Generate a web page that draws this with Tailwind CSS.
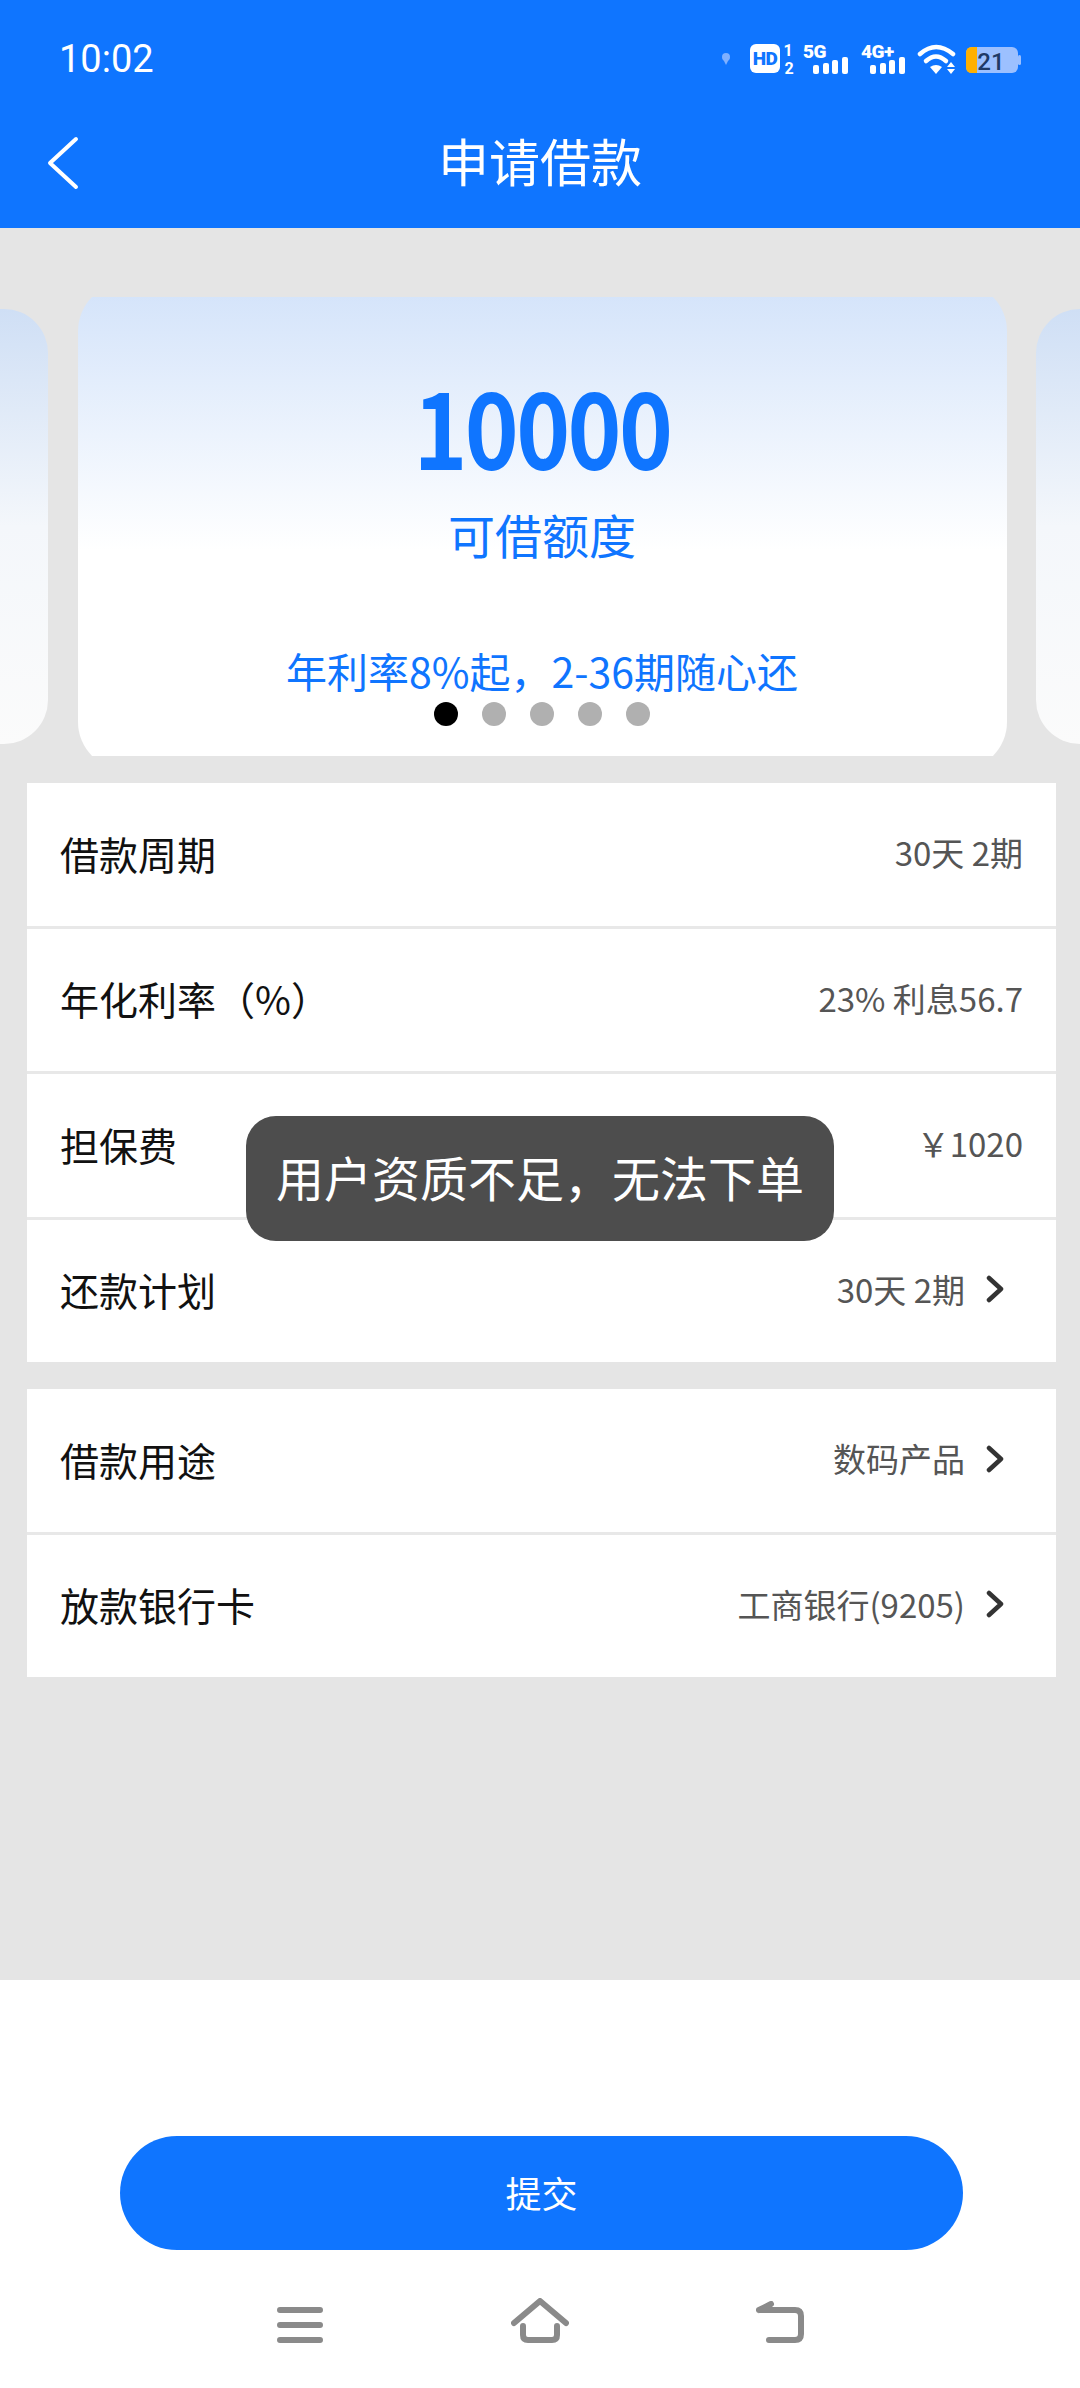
<!DOCTYPE html>
<html lang="zh">
<head>
<meta charset="utf-8">
<script src="https://cdn.jsdelivr.net/npm/@tailwindcss/browser@4"></script>
<title>申请借款</title>
</head>
<body class="font-['Noto_Sans_CJK_SC',sans-serif] bg-white">
<div class="relative w-[1080px] h-[2388px] flex flex-col overflow-hidden">

    <!-- header -->
    <header class="bg-[#0f75ff] h-[228px] shrink-0 text-white">
        <div class="h-[120px] flex justify-between items-start pl-[59px] pr-[58px] pt-[30px]">
            <span class="font-['Roboto',sans-serif] text-[38px] leading-[58px]">10:02</span>
            <svg width="300" height="40" viewBox="0 0 300 40" class="mt-[10px]" fill="#fff">
                <circle cx="4" cy="17" r="4" fill="#7fb0ff"/>
                <path d="M1 19 L4 25 L7 19 Z" fill="#7fb0ff"/>
                <rect x="28" y="4" width="30" height="29" rx="6"/>
                <text x="43" y="25" text-anchor="middle" font-family="Roboto" font-weight="900" font-size="19" letter-spacing="-0.5" fill="#0f75ff">HD</text>
                <text x="66" y="16" text-anchor="middle" font-family="Roboto" font-weight="700" font-size="16">1</text>
                <text x="67" y="34" text-anchor="middle" font-family="Roboto" font-weight="700" font-size="16">2</text>
                <text x="81" y="18" font-family="Roboto" font-weight="900" font-size="19" letter-spacing="-0.5">5G</text>
                <rect x="91" y="25" width="6" height="9" rx="2"/>
                <rect x="101" y="23" width="6" height="11" rx="2"/>
                <rect x="110" y="20" width="6" height="14" rx="2"/>
                <rect x="120" y="17" width="6" height="17" rx="2"/>
                <text x="139" y="18" font-family="Roboto" font-weight="900" font-size="19" letter-spacing="-0.5">4G+</text>
                <rect x="148" y="25" width="6" height="9" rx="2"/>
                <rect x="158" y="23" width="6" height="11" rx="2"/>
                <rect x="167" y="20" width="6" height="14" rx="2"/>
                <rect x="177" y="17" width="6" height="17" rx="2"/>
                <g fill="none" stroke="#fff" stroke-width="4.5" stroke-linecap="round">
                    <path d="M198 14 Q214 0 231 14"/>
                    <path d="M204 21 Q214 12 224 21"/>
                </g>
                <path d="M208 27 Q214 23 220 27 L214 34 Z"/>
                <path d="M225 27 L229 22 L233 27 Z M225 29 L233 29 L229 34 Z"/>
                <rect x="244" y="7" width="52" height="26" rx="6" fill="#9cc0ff"/>
                <rect x="296" y="15" width="3" height="10" rx="1.5" fill="#9cc0ff"/>
                <path d="M250 7 H255 V33 H250 Q244 33 244 27 V13 Q244 7 250 7 Z" fill="#ffb000"/>
                <text x="269" y="30" text-anchor="middle" font-family="Roboto" font-weight="500" font-size="24" fill="#1f3a66">21</text>
            </svg>
        </div>
        <div class="relative h-[108px] flex items-start justify-center">
            <svg width="32" height="54" viewBox="0 0 32 54" class="absolute left-[47px] top-[16px]" fill="none" stroke="#fff" stroke-width="4" stroke-linecap="round" stroke-linejoin="round">
                <path d="M29 3 L3 27 L29 51"/>
            </svg>
            <h1 class="text-[51px] leading-[80px] text-center">申请借款</h1>
        </div>
    </header>

    <!-- page body -->
    <main class="bg-[#e5e5e5] h-[1752px] shrink-0 pt-[69px]">
        <div class="flex items-center justify-between h-[459px] overflow-hidden">
            <div class="w-[48px] h-[435px] rounded-r-[44px] bg-gradient-to-b from-[#cfdff5] via-[#f4f7fb] via-50% to-[#fbfbfb]"></div>
            <div class="w-[929px] h-[459px] overflow-hidden">
                <div class="h-[487px] -mt-[14px] rounded-[48px] bg-gradient-to-b from-[#d3e3fa] to-white to-55% flex flex-col items-center text-[#0f75ff]">
                    <div class="text-[104px] font-bold leading-[120px] mt-[82px] tracking-[-3px] scale-x-[0.88]">10000</div>
                    <div class="text-[47px] leading-[60px] mt-[19px]">可借额度</div>
                    <div class="text-[41px] leading-[56px] mt-[78px]">年利率8%起，2-36期随心还</div>
                    <div class="flex gap-[24px] mt-[4px]">
                        <span class="w-[24px] h-[24px] rounded-full bg-black"></span>
                        <span class="w-[24px] h-[24px] rounded-full bg-[#b0b0b0]"></span>
                        <span class="w-[24px] h-[24px] rounded-full bg-[#b0b0b0]"></span>
                        <span class="w-[24px] h-[24px] rounded-full bg-[#b0b0b0]"></span>
                        <span class="w-[24px] h-[24px] rounded-full bg-[#b0b0b0]"></span>
                    </div>
                </div>
            </div>
            <div class="w-[44px] h-[435px] rounded-l-[44px] bg-gradient-to-b from-[#cfdff5] via-[#f4f7fb] via-50% to-[#fbfbfb]"></div>
        </div>

        <section class="mx-[27px] w-[1029px] mt-[27px] bg-[#e8e8e8] flex flex-col gap-[3px]">
            <div class="h-[142.5px] bg-white flex items-center justify-between pl-[33px] pr-[33px] pb-[3px]">
                <span class="text-[39px] text-[#111]">借款周期</span>
                <span class="text-[33px] text-[#555]">30天 2期</span>
            </div>
            <div class="h-[142.5px] bg-white flex items-center justify-between pl-[33px] pr-[33px] pb-[3px]">
                <span class="text-[39px] text-[#111]">年化利率（%）</span>
                <span class="text-[33px] text-[#555]">23% 利息56.7</span>
            </div>
            <div class="h-[142.5px] bg-white flex items-center justify-between pl-[33px] pr-[33px] pb-[3px]">
                <span class="text-[39px] text-[#111]">担保费</span>
                <span class="text-[33px] text-[#555]">￥1020</span>
            </div>
            <div class="h-[142.5px] bg-white flex items-center justify-between pl-[33px] pr-[52px] pb-[3px]">
                <span class="text-[39px] text-[#111]">还款计划</span>
                <span class="flex items-center gap-[21px] text-[33px] text-[#555]">30天 2期
                    <svg width="18" height="28" viewBox="0 0 18 28" fill="none" stroke="#333" stroke-width="4.5" stroke-linecap="round" stroke-linejoin="round"><path d="M3 3 L15 14 L3 25"/></svg>
                </span>
            </div>
        </section>

        <section class="mx-[27px] w-[1029px] mt-[27px] bg-[#e8e8e8] flex flex-col gap-[3px]">
            <div class="h-[142.5px] bg-white flex items-center justify-between pl-[33px] pr-[52px] pb-[3px]">
                <span class="text-[39px] text-[#111]">借款用途</span>
                <span class="flex items-center gap-[21px] text-[33px] text-[#555]">数码产品
                    <svg width="18" height="28" viewBox="0 0 18 28" fill="none" stroke="#333" stroke-width="4.5" stroke-linecap="round" stroke-linejoin="round"><path d="M3 3 L15 14 L3 25"/></svg>
                </span>
            </div>
            <div class="h-[142.5px] bg-white flex items-center justify-between pl-[33px] pr-[52px] pb-[3px]">
                <span class="text-[39px] text-[#111]">放款银行卡</span>
                <span class="flex items-center gap-[21px] text-[33px] text-[#555]">工商银行(9205)
                    <svg width="18" height="28" viewBox="0 0 18 28" fill="none" stroke="#333" stroke-width="4.5" stroke-linecap="round" stroke-linejoin="round"><path d="M3 3 L15 14 L3 25"/></svg>
                </span>
            </div>
        </section>
    </main>

    <!-- footer -->
    <footer class="flex-1 bg-white flex flex-col items-center pt-[156px]">
        <button class="w-[843px] h-[114px] ml-[3px] pb-[2px] rounded-full bg-[#0f75ff] text-white text-[36px]">提交</button>
        <div class="w-[527px] flex justify-between items-end mt-[48px] ml-[1px]">
            <svg width="46" height="36" viewBox="0 0 46 36" fill="none" stroke="#8a8a8a" stroke-width="6" stroke-linecap="round"><path d="M3 3 H43 M3 18 H43 M3 33 H43"/></svg>
            <svg width="58" height="45" viewBox="0 0 58 45" fill="none" stroke="#8a8a8a" stroke-width="6" stroke-linecap="round" stroke-linejoin="round"><path d="M3 25 L29 3 L55 25 M12 28 V37 Q12 42 17 42 H41 Q46 42 46 37 V28"/></svg>
            <svg width="48" height="42" viewBox="0 0 48 42" fill="none" stroke="#8a8a8a" stroke-width="6" stroke-linecap="round" stroke-linejoin="round"><path d="M3 9 H39 Q45 9 45 15 V33 Q45 39 39 39 H13 M3 9 L15 3"/></svg>
        </div>
    </footer>

    <!-- toast -->
    <div class="absolute left-[246px] top-[1116px] w-[588px] h-[125px] pb-[6px] rounded-[30px] bg-[#4d4d4d] flex items-center justify-center text-white text-[48px]">用户资质不足，无法下单</div>
</div>
</body>
</html>
